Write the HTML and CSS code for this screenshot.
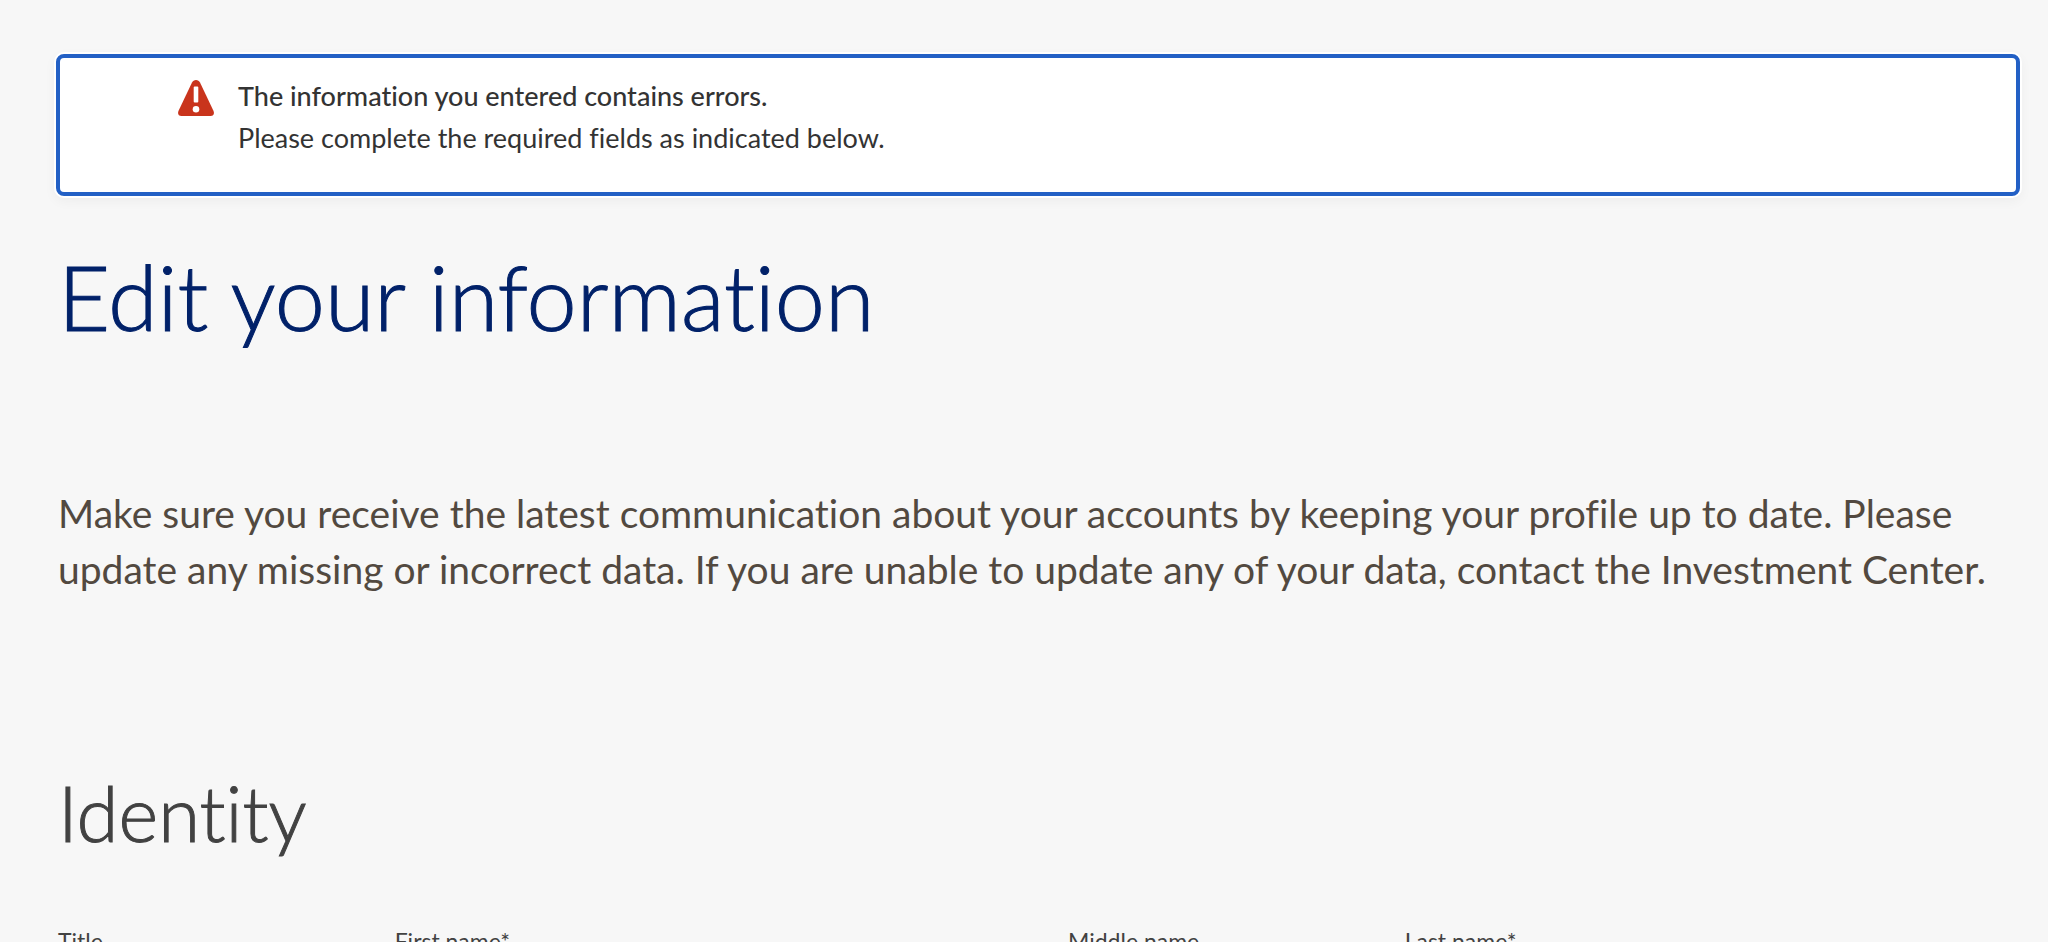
FILE: index.html
```html
<!DOCTYPE html>
<html lang="en">
<head>
<meta charset="utf-8">
<title>Edit your information</title>
<link rel="stylesheet" href="styles.css">
</head>
<body>
<main class="page">
  <section class="alert" role="alert">
    <svg class="alert-icon" viewBox="0 0 36 36" aria-hidden="true">
      <path fill="#c9341c" d="M18 0c1.800 0 3.200.900 4 2.400l13.300 28C36.800 33.600 35.500 36 32.600 36H3.400C.500 36-.800 33.600.700 30.400L14 2.400C14.800.900 16.200 0 18 0z"/>
      <rect x="15.700" y="6.500" width="4.600" height="16" rx="1" fill="#fff"/>
      <circle cx="18" cy="29.300" r="3.300" fill="#fff"/>
    </svg>
    <div class="alert-text">
      <p class="alert-title">The information you entered contains errors.</p>
      <p>Please complete the required fields as indicated below.</p>
    </div>
  </section>
  <div class="content">
    <h1 class="title">Edit your information</h1>
    <p class="intro">Make sure you receive the latest communication about your accounts by keeping your profile up to date. Please update any missing or incorrect data. If you are unable to update any of your data, contact the Investment Center.</p>
    <h2 class="section-title">Identity</h2>
    <form class="fields">
      <div class="field"><label for="title">Title</label><select id="title"></select></div>
      <div class="field field-wide"><label for="first">First name*</label><input id="first" type="text" required></div>
      <div class="field"><label for="middle">Middle name</label><input id="middle" type="text"></div>
      <div class="field field-wide"><label for="last">Last name*</label><input id="last" type="text" required></div>
    </form>
  </div>
</main>
</body>
</html>
```
FILE: styles.css
```css
* { box-sizing: border-box; }
body {
  margin: 0;
  height: 100vh;
  overflow: hidden;
  background: #f7f7f7;
  color: #333;
  font-family: Lato, "Noto Sans", sans-serif;
  font-variant-ligatures: none;
}
h1, h2, p { margin: 0; }
.page { padding: 54px 28px 0 56px; }
.alert {
  display: flex;
  gap: 24px;
  padding: 17px 118px 33px;
  background: #fff;
  border: 4px solid #2360c5;
  border-radius: 8px;
  box-shadow: 0 0 0 2px #fff, 0 4px 12px 2px rgba(0, 0, 0, 0.04);
}
.alert-icon { width: 36px; height: 36px; margin-top: 5px; flex: none; }
.alert-text { font-size: 27px; line-height: 42px; }
.alert-title { font-weight: 500; }
.content { padding: 0 2px; }
.title {
  margin-top: 40px;
  color: #012169;
  font-size: 90px;
  font-weight: 300;
  line-height: 120px;
  -webkit-text-stroke: 1px currentColor;
}
.intro {
  margin-top: 129px;
  color: #524940;
  font-size: 39px;
  line-height: 56px;
}
.section-title {
  margin-top: 164px;
  color: #424242;
  font-size: 76px;
  font-weight: 300;
  line-height: 104px;
  -webkit-text-stroke: 1px currentColor;
}
.fields {
  display: grid;
  grid-template-columns: repeat(12, 1fr);
  gap: 60px;
  margin-top: 60px;
}
.field {
  grid-column: span 2;
  display: flex;
  flex-direction: column;
  gap: 8px;
  color: #424242;
  font-size: 23px;
  line-height: 32px;
}
.field-wide { grid-column: span 4; }
.field input, .field select {
  height: 64px;
  border: 2px solid #8c8c8c;
  border-radius: 4px;
  background: #fff;
  font: inherit;
}
```
